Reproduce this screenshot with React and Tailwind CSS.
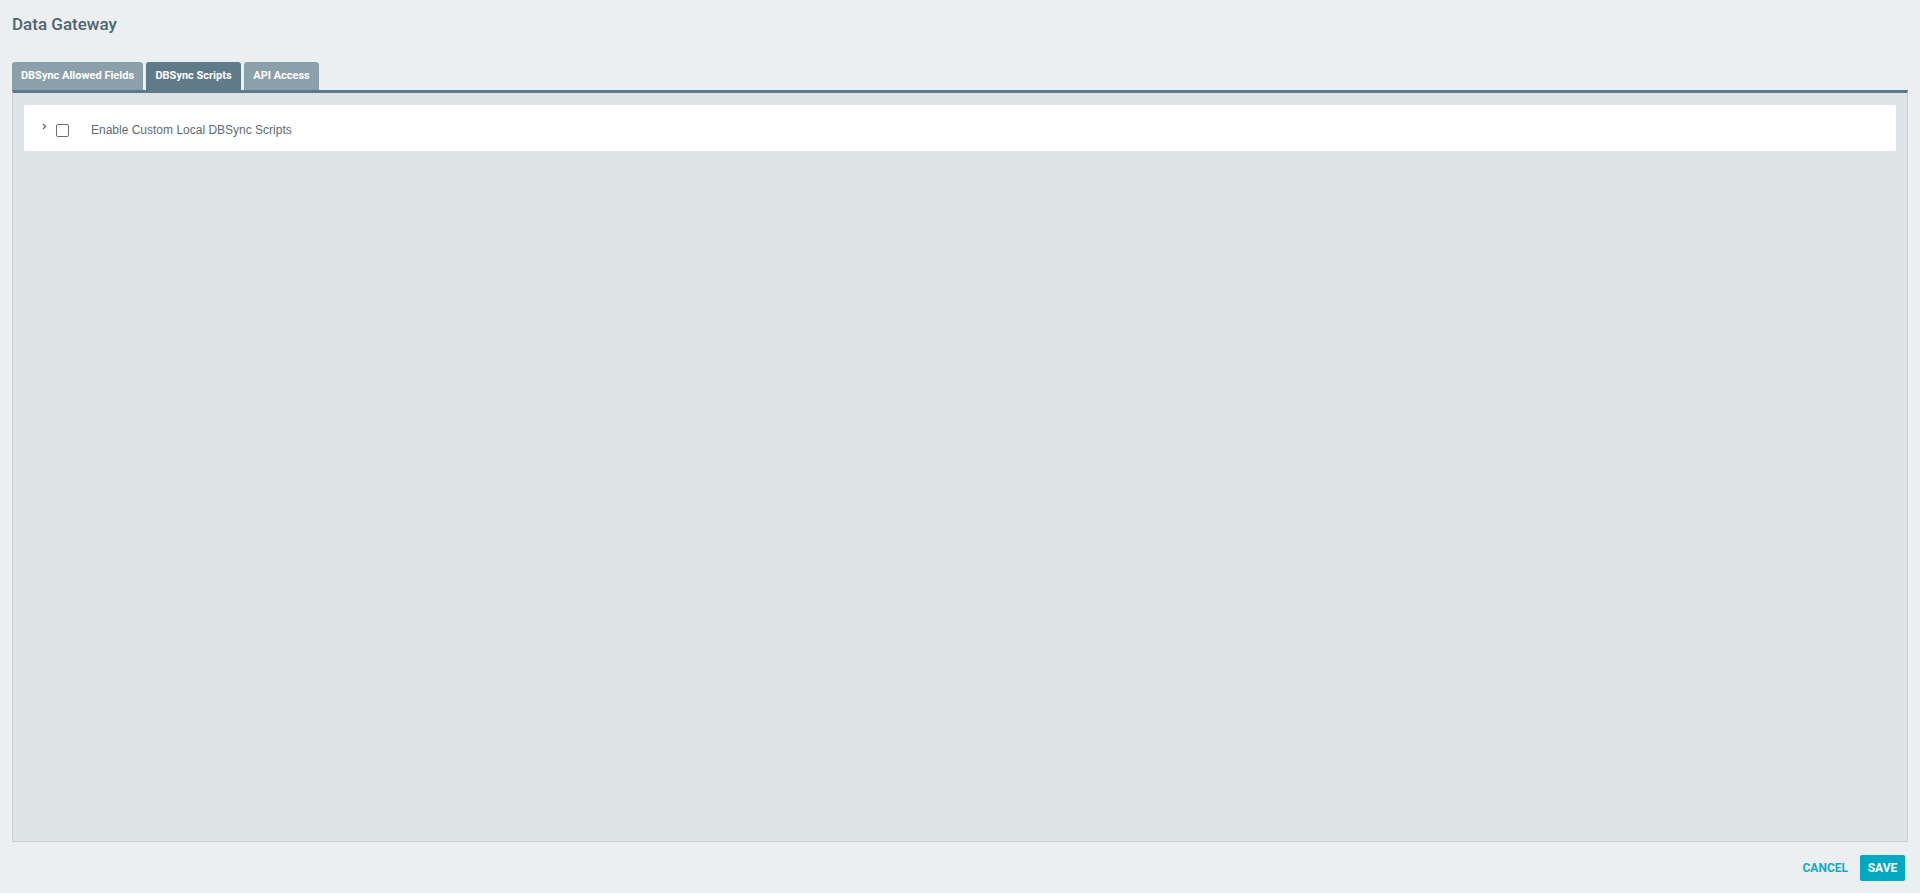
export default function App() {
  return (
    <div className="w-[1920px] h-[893px] bg-[#ebeff2] flex flex-col px-[12px]" style={{ fontFamily: 'Roboto, "Liberation Sans", sans-serif' }}>
      <div className="h-[62px] pt-[12px]">
        <h1 className="text-[17px] leading-[24px] font-medium text-[#4e6472]">Data Gateway</h1>
      </div>
      <div className="h-[28px] flex items-end gap-[3px]">
        <div className="h-[28px] w-[131px] bg-[#8ba0aa] rounded-t-[3px] text-white text-[11px] font-bold flex items-center justify-center">DBSync Allowed Fields</div>
        <div className="h-[28px] w-[95px] bg-[#5f7a88] rounded-t-[3px] text-white text-[11px] font-bold flex items-center justify-center">DBSync Scripts</div>
        <div className="h-[28px] w-[75px] bg-[#8ba0aa] rounded-t-[3px] text-white text-[11px] font-bold flex items-center justify-center">API Access</div>
      </div>
      <div className="h-[752px] bg-[#dee3e6] border-t-[3px] border-t-[#5d7a89] border-x border-b border-x-[#c9d0d4] border-b-[#c9d0d4] px-[11px] pt-[12px]">
        <div className="h-[46px] bg-white flex items-center pt-[4px]">
          <div className="w-[32px] flex justify-end pr-[9px] -mt-[7px]">
            <svg width="5" height="7" viewBox="0 0 5 7" fill="none">
              <path d="M1 1 L3.5 3.5 L1 6" stroke="#55606a" strokeWidth="1.1" />
            </svg>
          </div>
          <div className="w-[13px] h-[13px] border border-[#6b6f73] rounded-[2px] bg-white" />
          <span className="ml-[22px] text-[12px] leading-[14px] text-[#5f6b74]" style={{ fontFamily: '"Liberation Sans", Arial, sans-serif' }}>Enable Custom Local DBSync Scripts</span>
        </div>
      </div>
      <div className="flex-1 flex justify-end items-start pt-[13px] pr-[3px] gap-[11px]">
        <button className="h-[26px] px-[1px] text-[12px] font-bold text-[#10aac2] flex items-center">CANCEL</button>
        <button className="h-[26px] w-[45px] bg-[#00a9c2] rounded-[2px] text-[12px] font-bold text-white flex items-center justify-center">SAVE</button>
      </div>
    </div>
  );
}
